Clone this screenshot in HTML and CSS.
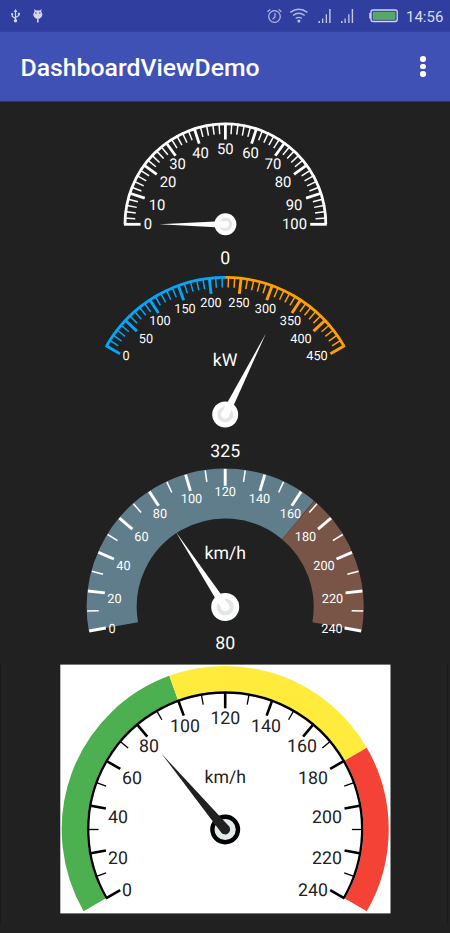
FILE: index.html
```html
<!DOCTYPE html>
<html lang="en">
<head>
<meta charset="utf-8">
<title>DashboardViewDemo</title>
<link rel="stylesheet" href="styles.css">
</head>
<body>
<div class="status">
  <svg class="status-left" width="60" height="31" viewBox="0 0 60 31">
    <g fill="none" stroke="#d3d6ee" stroke-width="1.2">
      <path d="M15.5 11V20M12.2 14V16.2L15.5 18.6M18.9 13.5V15.5L15.5 17.6"/>
    </g>
    <g fill="#d3d6ee">
      <path d="M15.5 9L17.3 12H13.7Z"/><circle cx="15.5" cy="20.8" r="1.7"/><circle cx="12.2" cy="14" r="1.1"/><rect x="17.9" y="12.8" width="2" height="2"/>
      <path d="M34.2 9L36 10.5Q37.8 9.9 39.8 10.5L41.6 9L41.2 11.6Q43.4 15 41.3 17.2Q39.9 19 37.8 19Q35.7 19 34.4 17.2Q32.2 15 34.5 11.6Z"/>
      <rect x="37" y="19" width="1.6" height="3.5" rx=".6"/>
    </g>
    <g fill="#303f9f"><circle cx="35.9" cy="13" r=".7"/><circle cx="39.8" cy="13" r=".7"/></g>
  </svg>
  <svg class="status-icons" width="140" height="31" viewBox="262 0 140 31">
    <g fill="none" stroke="#b4b9e0" stroke-width="1.2">
      <circle cx="274.5" cy="16.5" r="5.8"/><path d="M275 13V17L272.6 19.2M267.5 11.7L270.3 9.4M281.4 11.7L278.7 9.4"/>
      <path d="M290.3 12.4Q298.8 6 307.4 12.4M293 15.5Q298.8 11 304.7 15.5M295.7 18.5Q298.8 16.2 302 18.5" stroke-width="1.4"/>
    </g>
    <g fill="#c3c7e7">
      <circle cx="298.9" cy="21.1" r="1.5"/>
      <path d="M318.5 21h1.5v2h-1.5zM322 18.5h1.3V23H322zM325.7 14.3h1.3V23h-1.3zM329.2 9h1.4v14h-1.4z"/>
      <path d="M341 21h1.5v2H341zM344.5 18.5h1.3V23h-1.3zM348.2 14.3h1.3V23h-1.3zM351.7 9h1.4v14h-1.4z"/>
      <path d="M371 13h-1.8v5.5H371z"/>
    </g>
    <rect x="371" y="10" width="26.2" height="11.5" rx="2" fill="none" stroke="#d3d6ee" stroke-width="1.3"/>
    <rect x="372.8" y="11.8" width="22.6" height="8" fill="#58a766"/>
  </svg>
  <span class="clock">14:56</span>
</div>
<header class="appbar">
  <h1>DashboardViewDemo</h1>
  <span class="menu"><i></i><i></i><i></i></span>
</header>
<main id="gauges" class="gauges"></main>
<script src="gauges.js"></script>
</body>
</html>
```
FILE: styles.css
```css
* { box-sizing: border-box; }
body {
  margin: 0;
  width: 450px;
  height: 933px;
  overflow: hidden;
  background: #212121;
  color: #fff;
  font-family: Roboto, sans-serif;
}
.status {
  display: flex;
  align-items: center;
  height: 31px;
  background: #303f9f;
}
.status-left { flex: none; }
.status-icons { margin-left: 202px; flex: none; }
.clock {
  margin: 2px 0 0 4px;
  font-size: 15px;
  line-height: 20px;
  color: #d6d9ef;
}
.appbar {
  display: flex;
  align-items: center;
  justify-content: space-between;
  height: 71px;
  padding: 0 24.5px 0 20.5px;
  background: #3f51b5;
  border-top: 1px solid #32429f;
  border-bottom: 1px solid #283374;
}
.appbar h1 {
  margin: 3px 0 0;
  font-size: 24.8px;
  font-weight: 500;
  line-height: 32px;
}
.menu { display: flex; flex-direction: column; gap: 2px; }
.menu i { width: 5.6px; height: 5.6px; border-radius: 50%; background: #fff; }
.gauges { display: flex; flex-direction: column; }
.gauges svg { display: block; text-rendering: geometricPrecision; }
.gauges text { text-anchor: middle; fill: #fff; }
.gauges .light text { fill: #212121; }
```
FILE: gauges.js
```js
const gauges = [
  { top: 102, h: 170, cx: 225.4, cy: 224.3, r: 101.8, from: 180, sweep: 180, n: 10, sub: 5, max: 100,
    size: 14.8, major: 2.8, minor: 1.5, len: 17, short: 11.5, arc: 2.8, stops: [[1, '#fff']],
    at: [[148,224],[157,205],[168,182],[177.5,164],[200.5,153],[225.3,149],[250.5,153],[273,164],[283,182],[294,205],[294.5,224]],
    value: 0, vy: 257.5, needle: 66, half: 3.4, hub: 11 },
  { top: 272, h: 192, cx: 225.2, cy: 414.5, r: 138.5, from: 210, sweep: 120, n: 9, sub: 5, max: 450,
    size: 12.7, major: 2.9, minor: 1.5, len: 17, short: 11.5, arc: 2.8, stops: [[.5, '#00a8fa'], [1, '#ff9f00']],
    at: [[126,355.5],[146,338],[160,320.5],[185,308],[211,302],[239,302],[265.5,308],[290.5,320.5],[301,338],[317,355.5]],
    value: 325, vy: 450.5, needle: 91, half: 4, hub: 13, unit: 'kW', uy: 359.5 },
  { top: 464, h: 196, cx: 225.2, cy: 607, r: 138.5, from: 170, sweep: 200, n: 12, sub: 2, max: 240,
    size: 12.7, major: 2.9, minor: 1.5, len: 17.3, short: 12, band: 50, stops: [[.7, '#607d8b'], [1, '#795548']],
    at: [[112,628],[114.5,598.5],[123.5,565],[141.5,536],[160,513],[191.5,498.5],[225.3,491.5],[259.5,498.5],[290.5,513],[305.5,536],[324,565],[332.5,598.5],[332,628]],
    value: 80, vy: 642.5, needle: 90, half: 4, hub: 14, unit: 'km/h', uy: 553 },
  { top: 660, h: 273, cx: 225.2, cy: 829.5, r: 138.2, from: 150, sweep: 240, n: 12, sub: 2, max: 240,
    size: 17.7, major: 2.6, minor: 1.3, len: 17, short: 11.5, arc: 2.4, band: -25.3, light: true,
    stops: [[100 / 240, '#4caf50'], [.75, '#ffeb3b'], [1, '#f44336']],
    at: [[127,890],[118,857.5],[118,816.5],[132,778],[149,746],[185,725.5],[225.3,718],[266,725.5],[302,746],[313,778],[327,816.5],[327,857.5],[313,890]],
    value: 80, needle: 99, half: 5, hub: 15, unit: 'km/h', uy: 777 }
];

function point(g, r, deg) {
  const a = deg * Math.PI / 180;
  return (g.cx + r * Math.cos(a)).toFixed(2) + ' ' + (g.cy + r * Math.sin(a)).toFixed(2);
}

function arc(g, r, a, b, width, color) {
  const large = b - a > 180 ? 1 : 0;
  return `<path fill="none" stroke="${color}" stroke-width="${width}" d="M${point(g, r, a)}A${r} ${r} 0 ${large} 1 ${point(g, r, b)}"/>`;
}

function label(x, y, size, text) {
  return `<text x="${x}" y="${y + size * .355}" font-size="${size}">${text}</text>`;
}

function draw(g) {
  let s = '';
  const ink = g.light ? '#000' : '#fff';
  if (g.light) {
    s += '<rect x="60.3" y="664.6" width="330.2" height="248.8" fill="#fff"/>';
    s += '<path stroke="#1b1b1b" d="M.5 662V925M447.5 662V925"/>';
  }

  let a = g.from;
  for (const [stop, color] of g.stops) {
    const b = g.from + g.sweep * stop;
    if (g.band) s += arc(g, g.r - g.band / 2, a, b, Math.abs(g.band), color);
    else s += arc(g, g.r - g.arc / 2, a, b, g.arc, color);
    a = b;
  }
  if (g.band && g.arc) s += arc(g, g.r - g.arc / 2, g.from, g.from + g.sweep, g.arc, ink);
  if (g.band > 0) s += `<path stroke="#3d4245" stroke-width=".7" d="M${point(g, g.r, 310)}L${point(g, g.r - 23, 310)}"/>`;

  for (let i = 0; i <= g.n * g.sub; i++) {
    const big = i % g.sub === 0;
    const t = i / (g.n * g.sub);
    const color = g.band ? ink : g.stops.find(p => t <= p[0])[1];
    const deg = g.from + g.sweep * t;
    s += `<path stroke="${color}" stroke-width="${big ? g.major : g.minor}" d="M${point(g, g.r - .4, deg)}L${point(g, g.r - (big ? g.len : g.short), deg)}"/>`;
  }
  g.at.forEach(([x, y], i) => { s += label(x, y, g.size, g.max / g.n * i); });
  if (g.unit) s += label(225.2, g.uy, 17.7, g.unit);
  if (g.vy) s += label(225.2, g.vy, 17.7, g.value);

  const d = g.from + g.sweep * g.value / g.max;
  const shape = `M${point(g, g.needle, d)}L${point(g, g.half, d + 90)}A${g.half} ${g.half} 0 0 1 ${point(g, g.half, d - 90)}Z`;
  if (g.light) {
    s += `<circle cx="${g.cx}" cy="${g.cy}" r="12.8" fill="#e4eaec" stroke="#000" stroke-width="4.4"/>`;
    s += `<path fill="#212121" d="${shape}"/>`;
  } else {
    s += `<circle cx="${g.cx}" cy="${g.cy}" r="${g.hub}" fill="#fff"/>`;
    s += `<circle cx="${g.cx}" cy="${g.cy}" r="${g.hub * .46}" fill="none" stroke="#e1e6e7" stroke-width="${g.hub * .3}"/>`;
    s += `<path fill="#fff" d="${shape}"/>`;
  }
  return `<svg class="${g.light ? 'light' : 'dark'}" width="450" height="${g.h}" viewBox="0 ${g.top} 450 ${g.h}">${s}</svg>`;
}

document.getElementById('gauges').innerHTML = gauges.map(draw).join('');
```
